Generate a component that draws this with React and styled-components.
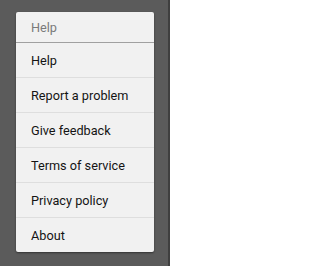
import React from "react";
import styled, { createGlobalStyle } from "styled-components";

const Global = createGlobalStyle`
  html, body { margin: 0; padding: 0; background: #ffffff; }
  body { font-family: Roboto, "Noto Sans", sans-serif; }
`;

const Screen = styled.div`
  box-sizing: border-box;
  width: 170px;
  height: 266px;
  padding: 12px 0 0 16px;
  background: #5b5b5b;
  border-right: 2px solid #3f3f3f;
`;

const Menu = styled.div`
  width: 138px;
  height: 240px;
  background: #f1f1f1;
  border-radius: 2px;
  box-shadow: 0 1px 2px rgba(0, 0, 0, 0.45);
  display: flex;
  flex-direction: column;
  overflow: hidden;
`;

const Header = styled.div`
  height: 30px;
  flex: none;
  display: flex;
  align-items: center;
  padding-left: 15px;
  font-size: 12.7px;
  color: #7a7a7a;
  border-bottom: 1px solid #a0a0a0;
`;

const Item = styled.div`
  flex: 1;
  display: flex;
  align-items: center;
  padding-left: 15px;
  font-size: 12.7px;
  color: #141414;
  border-bottom: ${(p) => (p.$last ? "none" : "1px solid #dedede")};
`;

const items = [
  "Help",
  "Report a problem",
  "Give feedback",
  "Terms of service",
  "Privacy policy",
  "About",
];

export default function App() {
  return (
    <>
      <Global />
      <Screen>
        <Menu>
          <Header>Help</Header>
          {items.map((t, i) => (
            <Item key={t} $last={i === items.length - 1}>
              {t}
            </Item>
          ))}
        </Menu>
      </Screen>
    </>
  );
}
